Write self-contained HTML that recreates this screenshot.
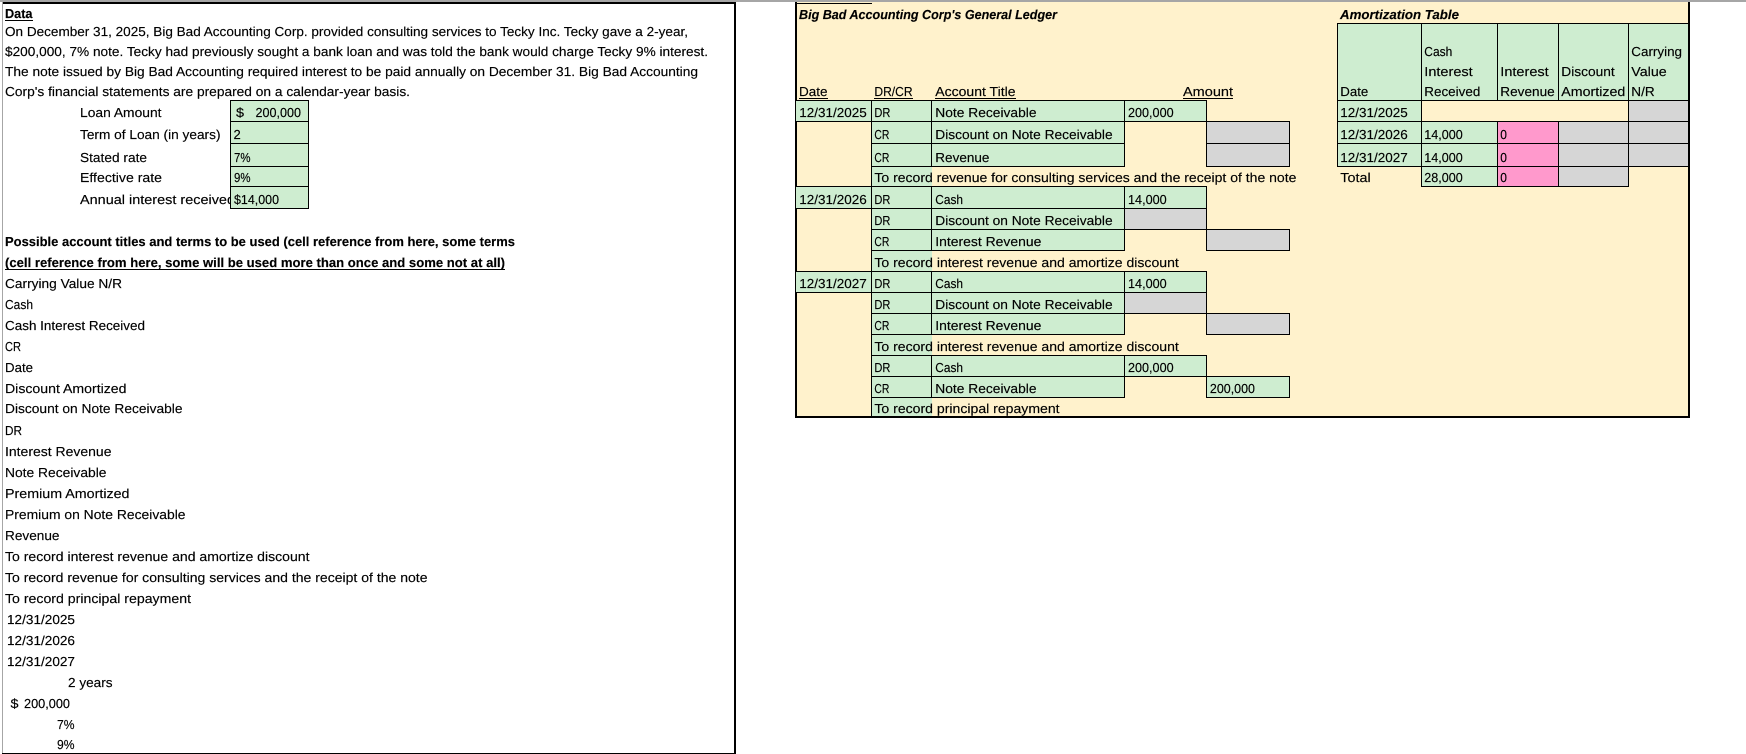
<!DOCTYPE html>
<html><head><meta charset="utf-8"><title>Big Bad Accounting Corp</title>
<style>
html,body{margin:0;padding:0;background:#fff;width:1746px;height:754px;overflow:hidden}
svg{display:block;font-family:"Liberation Sans",sans-serif;font-size:13px;fill:#000}
text{text-rendering:geometricPrecision;stroke:#000;stroke-width:.15}
.g{fill:#CEEDD0;stroke:#000;stroke-width:1}
.n{fill:#D6D6D6;stroke:#000;stroke-width:1}
.p{fill:#FF99CC;stroke:#000;stroke-width:1}
.c{fill:#FFF2CC;stroke:#000;stroke-width:1}
.b{font-weight:700}
.bi{font-weight:700;font-style:italic}
</style></head><body>
<svg xmlns="http://www.w3.org/2000/svg" width="1746" height="754" viewBox="0 0 1746 754">
<g shape-rendering="crispEdges">
<rect x="0" y="0" width="1746" height="2" fill="#A6A6A6"/>
<!-- left box -->
<rect x="2" y="2" width="734" height="752" fill="#fff"/>
<rect x="2" y="2" width="734" height="2" fill="#000"/>
<rect x="2" y="2" width="1" height="752" fill="#A6A6A6"/>
<rect x="734" y="2" width="2" height="752" fill="#000"/>
<rect x="2" y="753" width="734" height="1" fill="#000"/>
<!-- left data cells -->
<rect class="g" x="230.5" y="100.5" width="78" height="21"/>
<rect class="g" x="230.5" y="121.5" width="78" height="22"/>
<rect class="g" x="230.5" y="143.5" width="78" height="23"/>
<rect class="g" x="230.5" y="166.5" width="78" height="20"/>
<!-- ledger background -->
<rect x="796" y="2" width="893" height="415" fill="#FFF2CC"/>
<rect x="795" y="2" width="2" height="416" fill="#000"/>
<rect x="1688" y="2" width="2" height="416" fill="#000"/>
<rect x="795" y="416" width="895" height="2" fill="#000"/>
<rect x="797" y="3" width="75" height="1" fill="#000"/>
<!-- ledger rows -->
<rect class="g" x="795.5" y="100.5" width="76" height="21"/>
<rect class="g" x="871.5" y="100.5" width="60" height="21"/>
<rect class="g" x="931.5" y="100.5" width="193" height="21"/>
<rect class="g" x="1124.5" y="100.5" width="82" height="21"/>
<rect class="g" x="871.5" y="121.5" width="60" height="22"/>
<rect class="g" x="931.5" y="121.5" width="193" height="22"/>
<rect class="n" x="1206.5" y="121.5" width="83" height="22"/>
<rect class="g" x="871.5" y="143.5" width="60" height="23"/>
<rect class="g" x="931.5" y="143.5" width="193" height="23"/>
<rect class="n" x="1206.5" y="143.5" width="83" height="23"/>
<rect x="872" y="167" width="60" height="19" fill="#CEEDD0"/>
<rect x="871" y="166" width="1" height="20" fill="#000"/>

<rect class="g" x="795.5" y="186.5" width="76" height="22"/>
<rect class="g" x="871.5" y="186.5" width="60" height="22"/>
<rect class="g" x="931.5" y="186.5" width="193" height="22"/>
<rect class="g" x="1124.5" y="186.5" width="82" height="22"/>
<rect class="g" x="871.5" y="208.5" width="60" height="21"/>
<rect class="g" x="931.5" y="208.5" width="193" height="21"/>
<rect class="n" x="1124.5" y="208.5" width="82" height="21"/>
<rect class="g" x="871.5" y="229.5" width="60" height="21"/>
<rect class="g" x="931.5" y="229.5" width="193" height="21"/>
<rect class="n" x="1206.5" y="229.5" width="83" height="21"/>
<rect x="872" y="251" width="60" height="20" fill="#CEEDD0"/>
<rect x="871" y="250" width="1" height="21" fill="#000"/>

<rect class="g" x="795.5" y="271.5" width="76" height="21"/>
<rect class="g" x="871.5" y="271.5" width="60" height="21"/>
<rect class="g" x="931.5" y="271.5" width="193" height="21"/>
<rect class="g" x="1124.5" y="271.5" width="82" height="21"/>
<rect class="g" x="871.5" y="292.5" width="60" height="21"/>
<rect class="g" x="931.5" y="292.5" width="193" height="21"/>
<rect class="n" x="1124.5" y="292.5" width="82" height="21"/>
<rect class="g" x="871.5" y="313.5" width="60" height="21"/>
<rect class="g" x="931.5" y="313.5" width="193" height="21"/>
<rect class="n" x="1206.5" y="313.5" width="83" height="21"/>
<rect x="872" y="335" width="60" height="20" fill="#CEEDD0"/>
<rect x="871" y="334" width="1" height="21" fill="#000"/>

<rect class="g" x="871.5" y="355.5" width="60" height="21"/>
<rect class="g" x="931.5" y="355.5" width="193" height="21"/>
<rect class="g" x="1124.5" y="355.5" width="82" height="21"/>
<rect class="g" x="871.5" y="376.5" width="60" height="21"/>
<rect class="g" x="931.5" y="376.5" width="193" height="21"/>
<rect class="g" x="1206.5" y="376.5" width="83" height="21"/>
<rect x="872" y="398" width="60" height="20" fill="#CEEDD0"/>
<rect x="871" y="397" width="1" height="21" fill="#000"/>
<rect x="872" y="416" width="60" height="2" fill="#000"/>

<!-- amortization -->
<rect class="g" x="1337.5" y="23.5" width="84" height="77"/>
<rect class="g" x="1421.5" y="23.5" width="76" height="77"/>
<rect class="g" x="1497.5" y="23.5" width="61" height="77"/>
<rect class="g" x="1558.5" y="23.5" width="70" height="77"/>
<rect class="g" x="1628.5" y="23.5" width="60" height="77"/>
<rect class="g" x="1337.5" y="100.5" width="84" height="21"/>
<rect class="c" x="1421.5" y="100.5" width="207" height="21"/>
<rect class="n" x="1628.5" y="100.5" width="60" height="21"/>
<rect class="g" x="1337.5" y="121.5" width="84" height="22"/>
<rect class="g" x="1421.5" y="121.5" width="76" height="22"/>
<rect class="p" x="1497.5" y="121.5" width="61" height="22"/>
<rect class="n" x="1558.5" y="121.5" width="70" height="22"/>
<rect class="n" x="1628.5" y="121.5" width="60" height="22"/>
<rect class="g" x="1337.5" y="143.5" width="84" height="23"/>
<rect class="g" x="1421.5" y="143.5" width="76" height="23"/>
<rect class="p" x="1497.5" y="143.5" width="61" height="23"/>
<rect class="n" x="1558.5" y="143.5" width="70" height="23"/>
<rect class="n" x="1628.5" y="143.5" width="60" height="23"/>
<rect class="g" x="1421.5" y="166.5" width="76" height="20"/>
<rect class="p" x="1497.5" y="166.5" width="61" height="20"/>
<rect class="n" x="1558.5" y="166.5" width="70" height="20"/>
<rect x="1337" y="166" width="351" height="1" fill="#000"/>

<!-- underlines -->
<rect x="5" y="20" width="28" height="1" fill="#000"/>
<rect x="5" y="269" width="500" height="1" fill="#000"/>
<rect x="799" y="98" width="29" height="1" fill="#000"/>
<rect x="874" y="98" width="39" height="1" fill="#000"/>
<rect x="935" y="98" width="81" height="1" fill="#000"/>
<rect x="1183" y="98" width="50" height="1" fill="#000"/>
</g>

<g>
<text class="b" x="5" y="18" textLength="27.5" lengthAdjust="spacingAndGlyphs">Data</text>
<text x="5" y="36" textLength="683" lengthAdjust="spacingAndGlyphs">On December  31, 2025, Big Bad Accounting Corp. provided consulting services to Tecky Inc. Tecky gave a 2-year,</text>
<text x="5" y="56" textLength="703" lengthAdjust="spacingAndGlyphs">$200,000, 7% note. Tecky had previously sought a bank loan and was told the bank would charge Tecky 9% interest.</text>
<text x="5" y="76" textLength="693" lengthAdjust="spacingAndGlyphs">The note issued by Big Bad Accounting required interest to be paid annually on December 31. Big Bad Accounting</text>
<text x="5" y="96" textLength="405" lengthAdjust="spacingAndGlyphs">Corp's financial statements are prepared on a calendar-year basis.</text>
<text x="80" y="117" textLength="81.5" lengthAdjust="spacingAndGlyphs">Loan Amount</text>
<text x="80" y="139" textLength="140.5" lengthAdjust="spacingAndGlyphs">Term of Loan (in years)</text>
<text x="80" y="162" textLength="67" lengthAdjust="spacingAndGlyphs">Stated rate</text>
<text x="80" y="182" textLength="82" lengthAdjust="spacingAndGlyphs">Effective rate</text>
<text x="80" y="204" textLength="155" lengthAdjust="spacingAndGlyphs">Annual interest received</text>
<rect class="g" x="230.5" y="186.5" width="78" height="22" shape-rendering="crispEdges"/>
<text x="236" y="117" textLength="8" lengthAdjust="spacingAndGlyphs">$</text>
<text x="255.5" y="117" textLength="45.5" lengthAdjust="spacingAndGlyphs">200,000</text>
<text x="233.5" y="139">2</text>
<text x="234" y="162" textLength="16.5" lengthAdjust="spacingAndGlyphs">7%</text>
<text x="234" y="182" textLength="16.5" lengthAdjust="spacingAndGlyphs">9%</text>
<text x="234" y="204" textLength="45" lengthAdjust="spacingAndGlyphs">$14,000</text>

<text class="b" x="5" y="246" textLength="510" lengthAdjust="spacingAndGlyphs">Possible account titles and terms to be used (cell reference from here, some terms</text>
<text class="b" x="5" y="267" textLength="500" lengthAdjust="spacingAndGlyphs">(cell reference from here, some will be used more than once and some not at all)</text>
<text x="5" y="288" textLength="117" lengthAdjust="spacingAndGlyphs">Carrying Value N/R</text>
<text x="5" y="309" textLength="28" lengthAdjust="spacingAndGlyphs">Cash</text>
<text x="5" y="330" textLength="140" lengthAdjust="spacingAndGlyphs">Cash Interest Received</text>
<text x="5" y="351" textLength="16" lengthAdjust="spacingAndGlyphs">CR</text>
<text x="5" y="372" textLength="28" lengthAdjust="spacingAndGlyphs">Date</text>
<text x="5" y="393" textLength="121.5" lengthAdjust="spacingAndGlyphs">Discount Amortized</text>
<text x="5" y="413" textLength="177.5" lengthAdjust="spacingAndGlyphs">Discount on Note Receivable</text>
<text x="5" y="435" textLength="17" lengthAdjust="spacingAndGlyphs">DR</text>
<text x="5" y="456" textLength="106.5" lengthAdjust="spacingAndGlyphs">Interest Revenue</text>
<text x="5" y="477" textLength="101.5" lengthAdjust="spacingAndGlyphs">Note Receivable</text>
<text x="5" y="498" textLength="124.5" lengthAdjust="spacingAndGlyphs">Premium Amortized</text>
<text x="5" y="519" textLength="180.5" lengthAdjust="spacingAndGlyphs">Premium on Note Receivable</text>
<text x="5" y="540" textLength="54.5" lengthAdjust="spacingAndGlyphs">Revenue</text>
<text x="5" y="561" textLength="304.5" lengthAdjust="spacingAndGlyphs">To record interest revenue and amortize discount</text>
<text x="5" y="582" textLength="422.5" lengthAdjust="spacingAndGlyphs">To record revenue for consulting services and the receipt of the note</text>
<text x="5" y="603" textLength="186" lengthAdjust="spacingAndGlyphs">To record principal repayment</text>
<text x="7" y="624" textLength="68" lengthAdjust="spacingAndGlyphs">12/31/2025</text>
<text x="7" y="645" textLength="68" lengthAdjust="spacingAndGlyphs">12/31/2026</text>
<text x="7" y="666" textLength="68" lengthAdjust="spacingAndGlyphs">12/31/2027</text>
<text x="68" y="687" textLength="44.5" lengthAdjust="spacingAndGlyphs">2 years</text>
<text x="10.5" y="708" textLength="8" lengthAdjust="spacingAndGlyphs">$</text>
<text x="24" y="708" textLength="46" lengthAdjust="spacingAndGlyphs">200,000</text>
<text x="57" y="729" textLength="17.5" lengthAdjust="spacingAndGlyphs">7%</text>
<text x="57" y="749" textLength="17.5" lengthAdjust="spacingAndGlyphs">9%</text>

<text class="bi" x="799" y="19" textLength="258" lengthAdjust="spacingAndGlyphs">Big Bad Accounting Corp's General Ledger</text>
<text x="799" y="96" textLength="28.5" lengthAdjust="spacingAndGlyphs">Date</text>
<text x="874.4" y="96" textLength="38.2" lengthAdjust="spacingAndGlyphs">DR/CR</text>
<text x="935.3" y="96" textLength="80.2" lengthAdjust="spacingAndGlyphs">Account Title</text>
<text x="1183" y="96" textLength="50" lengthAdjust="spacingAndGlyphs">Amount</text>

<text x="799.3" y="117" textLength="67.5" lengthAdjust="spacingAndGlyphs">12/31/2025</text>
<text x="874.4" y="117" textLength="16" lengthAdjust="spacingAndGlyphs">DR</text>
<text x="935.3" y="117" textLength="101.2" lengthAdjust="spacingAndGlyphs">Note Receivable</text>
<text x="1128" y="117" textLength="45.6" lengthAdjust="spacingAndGlyphs">200,000</text>
<text x="874.4" y="139" textLength="15" lengthAdjust="spacingAndGlyphs">CR</text>
<text x="935.3" y="139" textLength="177.3" lengthAdjust="spacingAndGlyphs">Discount on Note Receivable</text>
<text x="874.4" y="162" textLength="15" lengthAdjust="spacingAndGlyphs">CR</text>
<text x="935.3" y="162" textLength="54.1" lengthAdjust="spacingAndGlyphs">Revenue</text>
<text x="874.4" y="182" textLength="422" lengthAdjust="spacingAndGlyphs">To record revenue for consulting services and the receipt of the note</text>

<text x="799.3" y="204" textLength="67.5" lengthAdjust="spacingAndGlyphs">12/31/2026</text>
<text x="874.4" y="204" textLength="16" lengthAdjust="spacingAndGlyphs">DR</text>
<text x="935.3" y="204" textLength="27.7" lengthAdjust="spacingAndGlyphs">Cash</text>
<text x="1128" y="204" textLength="38.7" lengthAdjust="spacingAndGlyphs">14,000</text>
<text x="874.4" y="225" textLength="16" lengthAdjust="spacingAndGlyphs">DR</text>
<text x="935.3" y="225" textLength="177.3" lengthAdjust="spacingAndGlyphs">Discount on Note Receivable</text>
<text x="874.4" y="246" textLength="15" lengthAdjust="spacingAndGlyphs">CR</text>
<text x="935.3" y="246" textLength="106.1" lengthAdjust="spacingAndGlyphs">Interest Revenue</text>
<text x="874.4" y="267" textLength="304.4" lengthAdjust="spacingAndGlyphs">To record interest revenue and amortize discount</text>

<text x="799.3" y="288" textLength="67.5" lengthAdjust="spacingAndGlyphs">12/31/2027</text>
<text x="874.4" y="288" textLength="16" lengthAdjust="spacingAndGlyphs">DR</text>
<text x="935.3" y="288" textLength="27.7" lengthAdjust="spacingAndGlyphs">Cash</text>
<text x="1128" y="288" textLength="38.7" lengthAdjust="spacingAndGlyphs">14,000</text>
<text x="874.4" y="309" textLength="16" lengthAdjust="spacingAndGlyphs">DR</text>
<text x="935.3" y="309" textLength="177.3" lengthAdjust="spacingAndGlyphs">Discount on Note Receivable</text>
<text x="874.4" y="330" textLength="15" lengthAdjust="spacingAndGlyphs">CR</text>
<text x="935.3" y="330" textLength="106.1" lengthAdjust="spacingAndGlyphs">Interest Revenue</text>
<text x="874.4" y="351" textLength="304.4" lengthAdjust="spacingAndGlyphs">To record interest revenue and amortize discount</text>
<text x="874.4" y="372" textLength="16" lengthAdjust="spacingAndGlyphs">DR</text>
<text x="935.3" y="372" textLength="27.7" lengthAdjust="spacingAndGlyphs">Cash</text>
<text x="1128" y="372" textLength="45.6" lengthAdjust="spacingAndGlyphs">200,000</text>
<text x="874.4" y="393" textLength="15" lengthAdjust="spacingAndGlyphs">CR</text>
<text x="935.3" y="393" textLength="101.2" lengthAdjust="spacingAndGlyphs">Note Receivable</text>
<text x="1209.9" y="393" textLength="45.1" lengthAdjust="spacingAndGlyphs">200,000</text>
<text x="874.4" y="413" textLength="185.2" lengthAdjust="spacingAndGlyphs">To record principal repayment</text>

<text class="bi" x="1340" y="19" textLength="119" lengthAdjust="spacingAndGlyphs">Amortization Table</text>
<text x="1340.3" y="96" textLength="28" lengthAdjust="spacingAndGlyphs">Date</text>
<text x="1424.3" y="56" textLength="28" lengthAdjust="spacingAndGlyphs">Cash</text>
<text x="1424.3" y="76" textLength="48.4" lengthAdjust="spacingAndGlyphs">Interest</text>
<text x="1424.3" y="96" textLength="56" lengthAdjust="spacingAndGlyphs">Received</text>
<text x="1500.3" y="76" textLength="48.4" lengthAdjust="spacingAndGlyphs">Interest</text>
<text x="1500.3" y="96" textLength="54.4" lengthAdjust="spacingAndGlyphs">Revenue</text>
<text x="1561.3" y="76" textLength="53.4" lengthAdjust="spacingAndGlyphs">Discount</text>
<text x="1561.3" y="96" textLength="64" lengthAdjust="spacingAndGlyphs">Amortized</text>
<text x="1631.3" y="56" textLength="50.7" lengthAdjust="spacingAndGlyphs">Carrying</text>
<text x="1631.3" y="76" textLength="35.4" lengthAdjust="spacingAndGlyphs">Value</text>
<text x="1631.3" y="96" textLength="23.4" lengthAdjust="spacingAndGlyphs">N/R</text>
<text x="1340.3" y="117" textLength="67.4" lengthAdjust="spacingAndGlyphs">12/31/2025</text>
<text x="1340.3" y="139" textLength="67.4" lengthAdjust="spacingAndGlyphs">12/31/2026</text>
<text x="1424.3" y="139" textLength="38.4" lengthAdjust="spacingAndGlyphs">14,000</text>
<text x="1500.3" y="139" textLength="6.7" lengthAdjust="spacingAndGlyphs">0</text>
<text x="1340.3" y="162" textLength="67.4" lengthAdjust="spacingAndGlyphs">12/31/2027</text>
<text x="1424.3" y="162" textLength="38.4" lengthAdjust="spacingAndGlyphs">14,000</text>
<text x="1500.3" y="162" textLength="6.7" lengthAdjust="spacingAndGlyphs">0</text>
<text x="1340.3" y="182" textLength="30.4" lengthAdjust="spacingAndGlyphs">Total</text>
<text x="1424.3" y="182" textLength="38.4" lengthAdjust="spacingAndGlyphs">28,000</text>
<text x="1500.3" y="182" textLength="6.7" lengthAdjust="spacingAndGlyphs">0</text>
</g>
</svg>
</body></html>
